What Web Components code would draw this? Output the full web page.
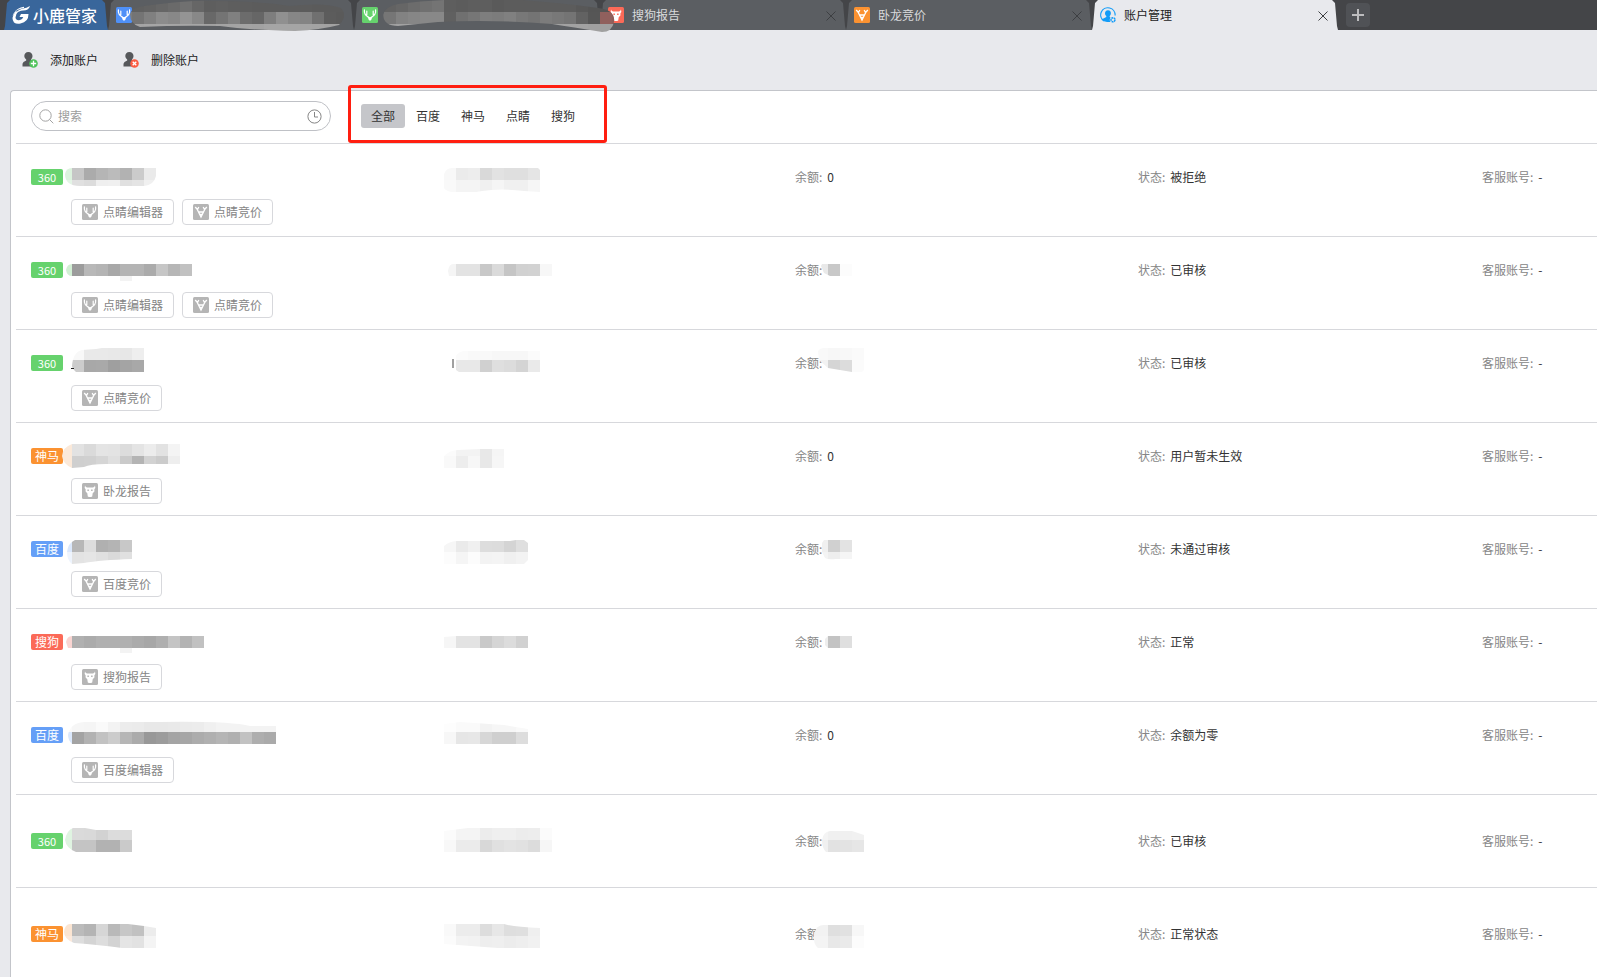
<!DOCTYPE html>
<html lang="zh-CN">
<head>
<meta charset="utf-8">
<meta name="viewport" content="width=device-width, initial-scale=1">
<title>小鹿管家 - 账户管理</title>
<style>
  html, body { height: 100%; }
  body {
    margin: 0; overflow: hidden; background: #e8e9ed; color: #333;
    font: 12px/16px "Noto Sans CJK SC", "Noto Sans", sans-serif;
  }
</style>
</head>
<body>
<app-shell>
  <tab-strip slot="tabs">
    <browser-tab icon="deer" color="#4f90f7"><pixel-mask patch="tab1"></pixel-mask></browser-tab>
    <browser-tab icon="deer" color="#66d26d"><pixel-mask patch="tab2"></pixel-mask></browser-tab>
    <browser-tab icon="report" color="#fb6a58" label="搜狗报告"></browser-tab>
    <browser-tab icon="bid" color="#fb9231" label="卧龙竞价"></browser-tab>
    <browser-tab icon="account" label="账户管理" active></browser-tab>
  </tab-strip>
  <tool-bar slot="tools"></tool-bar>
  <account-panel></account-panel>
</app-shell>

<script>
const glyphs = {
  deer: `<g fill="none" stroke="#fff" stroke-width="1.2" stroke-linecap="round"><path d="M2.4 2.8v2.4q.3 2.6 3 4.2l1.6 1M13.6 2.8v2.4q-.3 2.6-3 4.2L9 10.400M4.800 4v3.800M11.200 4v3.800"/></g><path fill="#fff" d="M5.500 9.600l2.500.7 2.500-.7-1.300 3.400q-1.200 1.200-2.400 0z"/>`,
  bid: `<g fill="none" stroke="#fff" stroke-width="1.300"><path d="M2.200 3l2 2.300M5.800 3L4.400 5.800 8 13l3.600-7.200L10.200 3M13.800 3l-2 2.300M5.200 8h5.600M6.500 10.300h3"/></g>`,
  report: `<path fill="#fff" d="M3 2.400q.6 1.800 2.200 2h5.600q1.600-.2 2.200-2 .9 2.400-.6 3.800v2.400l-1.700 1.600-.5 3.300q-2.200 1-4.400 0l-.5-3.300-1.700-1.600V6.200Q2.100 4.800 3 2.400z"/><path fill="var(--tile)" d="M5.400 6.600h1.500v1.500H5.400zM9.100 6.600h1.500v1.500H9.100z"/>`
};
function tile(name, color) {
  if (name === 'account') return `<svg width="16" height="16" viewBox="0 0 16 16" aria-hidden="true"><path d="M4 14A7.200 7.200 0 1 1 15.100 8.500" fill="none" stroke="#129cf8" stroke-width="1.200"/><path fill="#129cf8" d="M8 3.300c2.200 0 3 1.500 2.900 3.200-.1 1.200-.7 2.100-1.200 2.500v1l.8.5q-1.300 1.800-.1 4.500H7Q3.500 14.600 2 12.200l4.300-2.100V9C5.700 8.500 5 7.600 5 6.500c0-1.800.9-3.200 3-3.200z"/><circle cx="13" cy="12.800" r="2" fill="none" stroke="#129cf8" stroke-width="1.500" stroke-dasharray="1.800 .5"/></svg>`;
  return `<svg style="--tile:${color}" width="16" height="16" viewBox="0 0 16 16" aria-hidden="true"><rect width="16" height="16" rx="1.500" fill="${color}"/>${glyphs[name]}</svg>`;
}

/* Mosaic patches. x / y: offset inside the host cell, rows: one shade per 12px block. */
const patches = {
  tab1: { x: 12, y: 0, rows: ['60 60 62 66 6a 70 66 5e 60 5e 5d 5c 5c 5c 5c 5c 5b 5b 5b 5b', '7c 74 80 8c 88 94 88 68 74 80 6c 66 7e 90 86 84 70 5c 5a', 'a3 a4 a6 a6 a6 a6 a6 a2 a4 a4 a3 a2 a5 a5 a5 a4 a3 a2 a2'], clip: 'M10 14Q11 8 24 6Q70 0 92 1Q140 1 170 6Q205 2 221 8Q228 16 219 25Q200 30 175 31Q130 30 100 26Q60 25 20 27Q10 24 10 14Z' },
  tab2: { x: 18, y: 0, rows: ['5e 62 66 6c 70 74 5e 5c 5e 5e 5a 5c 5c 5c 5c 5c 5c 58 55 54 5a', '70 76 82 86 88 88 60 70 76 7e 7c 80 78 74 7c 78 74 62 56 90605d 8e5d59', 'a0 a0 a2 a4 a4 a4 a4 a2 a2 a2 a2 a4 a3 a2 a1 a2 a2 a2 a0 a0 a1'], clip: 'M11 15Q12 7 26 4Q80 -3 150 0Q190 3 226 8Q244 10 242 22Q240 32 230 32Q200 27 180 24Q120 19 66 22L26 26Q12 26 11 15Z' },
  n1: { x: 29, y: 24, rows: ['dcf3de c6 ab b5 bb b2 cb ea', 'e4f5e6 e0 dc ef f0 e0 e4 f0'], clip: 'M5 6Q6 0 12 0H96V8Q94 17 84 18H20Q5 18 5 6Z' },
  c1: { x: -7, y: 24, rows: ['f8 eb ed d9 e2 df df e5', 'f9 f4 f4 f0 f5 f0 f0 f6'], clip: 'M0 6Q2 0 8 0H94L96 2V24L80 23Q56 20 38 23L32 24H8Q2 23 0 20Z' },
  n2: { x: 29, y: 27, rows: ['d2efd4 9c b8 b4 a8 b4 b4 ab c6 b6 c1', '-- -- -- -- -- f3'], clip: 'M6 6Q7 0 12 0H132V12H72V17H60V12H12Q7 12 6 6Z' },
  c2: { x: -7, y: 27, rows: ['f5 e3 e3 c8 da c5 d1 d2 f7'], clip: 'M4 7Q5 0 9 0H108V12H5Z' },
  b2: { x: 21, y: 27, rows: ['e9 c8 fc'], clip: 'M5 2L6 0H36V12H14L8 9Z' },
  n3: { x: 41, y: 18, rows: ['f8 e9 e9 e8 e7 ee', 'cc a8 a9 9f a4 a8'], clip: 'M0 18Q1 4 10 2L24 1L30 0H72V24H4Q0 20 0 18Z', rest: '<path fill="#222" d="M-1 20h3v1h-3z"/>' },
  c3: { x: 5, y: 18, rows: ['fb f9 f9 f7 f7 f7 fb', 'e8 e8 d0 df dc d4 ea'], clip: 'M0 8Q3 3 10 3H84V24H3L0 22Z', rest: '<path fill="#a0a0a0" d="M-4 11h2v9h-2z"/>' },
  b3: { x: 21, y: 18, rows: ['f9 f7 f8 fa', 'f2 d5 dc fb'], clip: 'M2 3Q4 0 8 0H48V22L46 24H36L12 20L3 12Z' },
  n4: { x: 29, y: 21, rows: ['fbe9d9 e2 da e4 e3 dc e4 ec e2 f4', 'fbe9d9 cf d0 d5 df ca b4 d2 cb ee'], clip: 'M2 12Q3 3 12 0H120V20H46Q30 20 24 23L12 24Q3 20 2 12Z' },
  c4: { x: -7, y: 21, rows: ['fb f3 f3 e8 f5', 'f9 ed f7 e8 f6'], clip: 'M0 12Q6 6 14 6L36 5H60V24H0Z' },
  n5: { x: 29, y: 24, rows: ['dbe8fc b7 dd b0 b4 c8', 'eef4fd e3 e5 e0 da e0'], clip: 'M7 12Q8 3 15 0H72V19Q40 20 24 23L12 24Q7 20 7 12Z' },
  c5: { x: -7, y: 24, rows: ['f6 ea f0 dd dc d4 df', 'fc f5 fc f3 f4 f0 f3'], clip: 'M0 6Q6 1 14 1H66L72 0H80L84 3V20L80 24H0Z' },
  b5: { x: 21, y: 24, rows: ['f0 d0 e3', 'f4 ee f5'], clip: 'M6 3L8 0H36V19H20Q12 20 9 18L6 12Z' },
  n6: { x: 29, y: 27, rows: ['fad5d2 b0 ab b0 b0 b0 ab a7 af c4 b3 c1', '-- -- -- -- -- f3'], clip: 'M6 6Q7 0 12 0H144V12H72V17H60V12H8Z' },
  c6: { x: -7, y: 27, rows: ['f6 e3 e3 c9 d5 dc d1'], clip: 'M0 1L12 0H84V12H0Z' },
  b6: { x: 21, y: 27, rows: ['ee c3 df'], clip: 'M9 3L12 0H36V12H12L9 9Z' },
  n7: { x: 29, y: 18, rows: ['fa f6 f5 fa f3 ec eb e8 e8 e9 eb ec f0 f3 f3 f3 f3 f3', 'dbe8fc a3 b2 c2 cc b6 ab 98 9c a4 a6 ac b0 b5 b0 c2 ae aa'], clip: 'M8 15Q10 3 24 2H100Q170 1 190 6H216V24H12Q8 20 8 15Z' },
  c7: { x: -7, y: 18, rows: ['fd fa fa f3 f6 f6 f9', 'f7 e6 e7 d7 cf cf dd'], clip: 'M0 4L16 2L60 5L84 9V24H0Z' },
  n8: { x: 29, y: 33, rows: ['dff4e1 da d9 d2 dc dc', 'dff4e1 c4 c4 b2 b2 ca'], clip: 'M5 12Q7 2 13 0H25L36 2H72V24H16Q6 20 5 12Z' },
  c8: { x: -7, y: 33, rows: ['fb f4 f4 ec ef ef ec ed fb', 'f8 eb eb d8 e0 e3 e1 dc f6'], clip: 'M0 3L24 0H108V24H0Z' },
  b8: { x: 21, y: 33, rows: ['f4 f0 f0 f1', 'f0 e2 e3 e6'], clip: 'M6 12Q7 4 14 3H36L48 7V24H10Q6 20 6 12Z' },
  n9: { x: 29, y: 36, rows: ['fbe5d2 bb b4 d6 b9 c7 c1 ec', 'fbe9dc dd d4 dd d3 e5 e2 f4'], clip: 'M4 8Q5 0 10 0H68L84 2L96 4V24H62Q40 21 14 19Q4 15 4 8Z' },
  c9: { x: -7, y: 36, rows: ['f9 ec ec dd e7 de df ef', 'fb f3 f2 ee ef ec ee f1'], clip: 'M0 0H60Q70 3 96 4V24H54L0 20Z' },
  b9: { x: 9, y: 36, rows: ['f1 f2 df e1 f7', 'f4 f4 e8 ea fc'], clip: 'M10 10Q12 1 20 1H60V24H14Q9 20 10 10Z' }
};

class Base extends HTMLElement {
  connectedCallback() {
    if (!this.shadowRoot) this.attachShadow({ mode: 'open' }).innerHTML =
      `<style>:host,*{box-sizing:border-box}button{font:inherit;color:inherit;border:0;padding:0;margin:0;background:none;cursor:pointer;white-space:nowrap}svg{display:block;flex:none}${this.css()}</style>${this.html()}`;
  }
}

customElements.define('pixel-mask', class extends Base {
  css() {
    const p = patches[this.getAttribute('patch')];
    return `:host{position:absolute;left:${p.x}px;top:${p.y}px;z-index:2;pointer-events:none}svg{overflow:visible}`;
  }
  html() {
    const p = patches[this.getAttribute('patch')];
    const blocks = p.rows.map((row, j) => row.split(' ').map((c, i) => c === '--' ? '' :
      `<rect x="${i * 12}" y="${j * 12}" width="12" height="12" fill="#${c.length === 2 ? c + c + c : c}"/>`).join('')).join('');
    return `<svg width="12" height="12" shape-rendering="crispEdges" aria-hidden="true"><clipPath id="c"><path d="${p.clip}"/></clipPath><g clip-path="url(#c)">${blocks}</g>${p.rest || ''}</svg>`;
  }
});

customElements.define('app-shell', class extends Base {
  css() { return `:host{display:flex;flex-direction:column;height:100vh;overflow:hidden}main{flex:1;min-height:0;display:flex;flex-direction:column}`; }
  html() { return `<slot name="tabs"></slot><slot name="tools"></slot><main><slot></slot></main>`; }
});

const tabShape = 'polygon(0 100%,1px 26px,3px 3px,6px 0,calc(100% - 6px) 0,calc(100% - 3px) 3px,calc(100% - 1px) 26px,100% 100%)';

customElements.define('tab-strip', class extends Base {
  css() {
    return `:host{display:flex;flex:none;height:30px;padding-left:4px;background:#444548;position:relative;z-index:1}
    .brand{flex:none;width:104px;display:flex;align-items:center;gap:2px;padding-left:8px;color:#fff;text-decoration:none;font-size:16px;line-height:30px;font-weight:500;background:#39669b;clip-path:${tabShape}}
    .add{flex:none;width:24px;height:24px;margin:3px 8px;border-radius:4px;background:#505256;display:grid;place-items:center}`;
  }
  html() {
    return `<a class="brand" href="#"><svg width="19" height="18" viewBox="0 0 19 18" fill="#fff" aria-hidden="true"><path d="M18 0q-1 3.500-4.500 4.200Q8 4.500 6 6 3.500 8 3.500 11.500 4 14.800 8 14q2.500-.5 3.300-3H7.500L9 8h7.500q0 8-8 9.500-4 .8-6.500-1Q-1.500 11 3 7q3-3 7-4.200Q15 2 18 0z"/><path d="M12 .8Q5 2 2.500 6 5 3.500 12 2zM4 5Q1 7 .5 10 2 7.500 5 6z"/></svg><span>小鹿管家</span></a>
    <slot></slot><button class="add" aria-label="新建标签"><svg width="12" height="12"><path d="M6 0v12M0 6h12" stroke="#bdbdbf" stroke-width="2"/></svg></button>`;
  }
});

customElements.define('browser-tab', class extends Base {
  css() {
    return `:host{display:flex;align-items:center;position:relative;flex:0 1 246px;min-width:60px;padding:0 10px 0 8px;color:#d9dadc}
    :host([active]){color:#222}
    :host::before{content:"";position:absolute;inset:0;background:#5b5e62;clip-path:${tabShape}}
    :host([active])::before{background:#e8e9ed}
    .title{position:relative;flex:1;min-width:0;display:flex;align-items:center;gap:8px;overflow:hidden}
    .close{position:relative;width:10px;height:10px;margin-top:2px;color:#3d3f42}`;
  }
  html() {
    const label = this.getAttribute('label') || '';
    return `<button class="title"${label ? '' : ' aria-label="标签页"'}>${tile(this.getAttribute('icon'), this.getAttribute('color'))}<span>${label}</span></button>
    ${label ? '<button class="close" aria-label="关闭"><svg width="10" height="10"><path d="M.5.5l9 9M9.500.5l-9 9" stroke="currentColor"/></svg></button>' : ''}<slot></slot>`;
  }
});

customElements.define('tool-bar', class extends Base {
  css() { return `:host{display:flex;flex:none;height:60px;align-items:center;gap:25px;padding:0 22px;color:#222}button{display:flex;align-items:center;gap:12px}`; }
  html() {
    const person = (color, mark) => `<svg width="16" height="16" viewBox="0 0 16 16" aria-hidden="true"><path fill="#56585b" d="M6.300 0c2.700 0 4.200 1.700 4.200 4 0 1.500-.7 2.700-1.500 3.500v1L12 10v4.500H.5q-.5-3.500 1-4.500L4.200 8.500v-1C3.200 6.700 2.300 5.500 2.300 4c0-2.300 1.500-4 4-4z"/><circle cx="11.500" cy="11.500" r="4.300" fill="${color}"/><path d="${mark}" stroke="#fff" stroke-width="1.300"/></svg>`;
    return `<button>${person('#4fc25b', 'M11.500 8.800v5.400M8.800 11.500h5.400')}<span>添加账户</span></button><button>${person('#fb5a41', 'M9.700 9.700l3.600 3.600M13.300 9.700l-3.600 3.600')}<span>删除账户</span></button>`;
  }
});

customElements.define('search-box', class extends Base {
  css() {
    return `:host{display:flex;align-items:center;flex:0 1 300px;height:30px;padding:0 8px 0 7px;border:1px solid #bfc1c6;border-radius:15px;background:#fff}
    input{flex:1;min-width:0;border:0;outline:0;padding:0 0 0 4px;background:none;font:inherit;color:#333}input::placeholder{color:#9c9c9c;opacity:1}`;
  }
  html() {
    return `<svg width="15" height="15" fill="none" stroke="#a3a3a3" aria-hidden="true"><circle cx="6.500" cy="6.500" r="5.700"/><path d="M10.500 10.500l3.800 3.800"/></svg><input type="text" placeholder="搜索" aria-label="搜索"><button aria-label="搜索历史"><svg width="15" height="15" fill="none" stroke="#858585"><circle cx="7.500" cy="7.500" r="6.600"/><path d="M7.500 3v5h3.500"/></svg></button>`;
  }
});

customElements.define('platform-filter', class extends Base {
  css() {
    return `:host{display:flex;gap:1px;position:relative;flex:none}button{height:24px;padding:0 10px;border-radius:3px;color:#333}
    button[aria-pressed=true]{background:#c5c6ca}
    :host::after{content:"";position:absolute;inset:-19px -22px -15px -13px;border:3px solid #ff1e10;border-radius:3px;pointer-events:none;z-index:3}`;
  }
  html() { return ['全部', '百度', '神马', '点睛', '搜狗'].map((t, i) => `<button aria-pressed="${i === 0}">${t}</button>`).join(''); }
});

const platforms = { '360': '#66d26d', '神马': '#fb9231', '百度': '#659ff7', '搜狗': '#fb6a58' };
const toolIcon = name => name.endsWith('编辑器') ? 'deer' : name.endsWith('竞价') ? 'bid' : 'report';

customElements.define('account-row', class extends Base {
  css() {
    return `:host{display:grid;grid-template-columns:420fr 344fr 343fr 344fr 115px;min-height:93px;border-bottom:1px solid #d7d8dc;padding-left:15px;color:#333}
    .cell{position:relative;padding-top:20px;min-width:0}
    :host([bare]) .cell{padding-top:33px}
    .line{height:26px;display:flex;align-items:center;gap:5px;white-space:nowrap}
    .badge{width:32px;height:16px;border-radius:2px;color:#fff;text-align:center;line-height:16px}
    .num{font-size:11px}
    .label{color:#868686}
    .tools{display:flex;gap:8px;margin:9px 0 0 40px}
    .tools button{height:26px;display:flex;align-items:center;gap:5px;padding:0 10px;border:1px solid #d7d8dc;border-radius:4px;background:#fff;color:#858585}`;
  }
  html() {
    const d = this.data, n = d.n;
    const mask = k => patches[k + n] ? `<pixel-mask patch="${k + n}"></pixel-mask>` : '';
    const field = (label, value) => `<div class="line"><span class="label">${label}:</span><span>${value}</span></div>`;
    return `<div class="cell"><div class="line"><span class="badge${d.p === '360' ? ' num' : ''}" style="background:${platforms[d.p]}">${d.p}</span></div>
      ${d.t.length ? `<div class="tools">${d.t.map(t => `<button>${tile(toolIcon(t), '#b5b5b5')}<span>${t}</span></button>`).join('')}</div>` : ''}${mask('n')}</div>
      <div class="cell">${mask('c')}</div>
      <div class="cell">${field('余额', mask('b') ? '' : '0')}${mask('b')}</div>
      <div class="cell">${field('状态', d.s)}</div>
      <div class="cell">${field('客服账号', '-')}</div>`;
  }
});

const accounts = [
  { p: '360', t: ['点睛编辑器', '点睛竞价'], s: '被拒绝' },
  { p: '360', t: ['点睛编辑器', '点睛竞价'], s: '已审核' },
  { p: '360', t: ['点睛竞价'], s: '已审核' },
  { p: '神马', t: ['卧龙报告'], s: '用户暂未生效' },
  { p: '百度', t: ['百度竞价'], s: '未通过审核' },
  { p: '搜狗', t: ['搜狗报告'], s: '正常' },
  { p: '百度', t: ['百度编辑器'], s: '余额为零' },
  { p: '360', t: [], s: '已审核' },
  { p: '神马', t: [], s: '正常状态' }
];

customElements.define('account-panel', class extends Base {
  css() {
    return `:host{display:block;flex:1;min-height:0;margin-left:10px;padding-left:5px;border:solid #c3c5ca;border-width:1px 0 0 1px;border-radius:4px 0 0 0;background:#fff}
    header{display:flex;align-items:center;gap:30px;padding:10px 15px 12px;border-bottom:1px solid #d7d8dc}`;
  }
  html() { return `<header><search-box></search-box><platform-filter></platform-filter></header><section role="list"></section>`; }
  connectedCallback() {
    super.connectedCallback();
    const list = this.shadowRoot.querySelector('section');
    accounts.forEach((a, i) => {
      const row = document.createElement('account-row');
      row.data = { ...a, n: i + 1 };
      row.setAttribute('role', 'listitem');
      if (!a.t.length) row.setAttribute('bare', '');
      list.append(row);
    });
  }
});
</script>
</body>
</html>
